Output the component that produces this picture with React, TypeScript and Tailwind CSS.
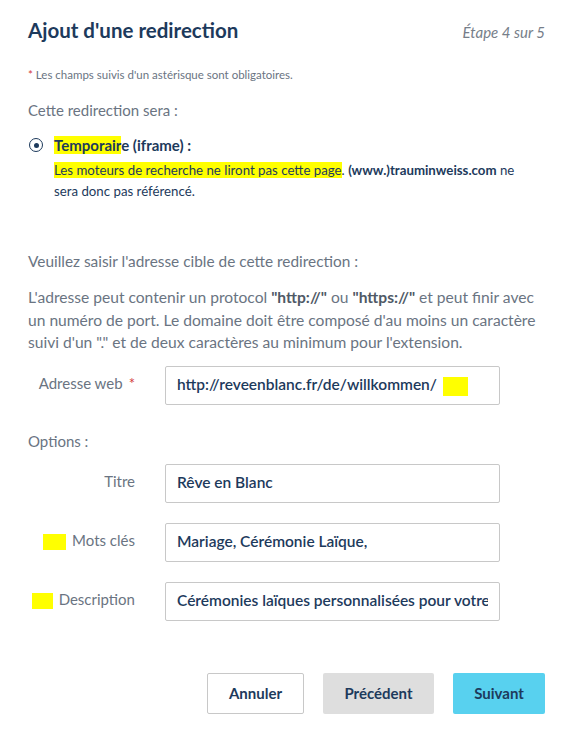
import React from 'react'

const navy = 'text-[#1d3a5c]'
const gray = 'text-[#6a7482]'

function Field({
  label,
  value,
  required,
  marker,
  mark,
}: {
  label: string
  value: string
  required?: boolean
  marker?: string
  mark?: boolean
}) {
  return (
    <div className="flex items-center">
      <div className={`w-[107px] -mt-[4px] text-right text-[15px] leading-5 ${gray}`}>
        {marker && <span className={`mr-[6px] inline-block h-[16px] bg-[#ffff00] align-middle ${marker}`} />}
        {label}
        {required && <span className="ml-[6px] text-[#d33b3b]">*</span>}
      </div>
      <div className="ml-[30px] flex h-[39px] w-[335px] items-center rounded-[2px] border border-[#c8c8c8] px-[11px]">
        <div className={`min-w-0 overflow-hidden whitespace-nowrap text-[15.5px] font-semibold ${navy}`}>
          {value}
          {mark && <span className="ml-[6px] inline-block h-[19px] w-[25px] bg-[#ffff00] align-middle" />}
        </div>
      </div>
    </div>
  )
}

export default function App() {
  return (
    <div className="min-h-screen bg-white pl-7 pr-[21px] font-['Lato','Liberation_Sans',sans-serif]">
      <div className="flex items-baseline justify-between pt-4">
        <h1 className={`text-[20.5px] font-bold leading-7 ${navy}`}>Ajout d'une redirection</h1>
        <span className="text-[15px] italic text-[#767e89]">Étape 4 sur 5</span>
      </div>

      <p className={`mt-[23px] text-[11.5px] leading-4 ${gray}`}>
        <span className="text-[#d33b3b]">*</span> Les champs suivis d'un astérisque sont obligatoires.
      </p>

      <p className={`mt-[17px] text-[15px] leading-5 ${gray}`}>Cette redirection sera :</p>

      <div className="mt-[15px] flex items-center">
        <span className="ml-px flex h-[14px] w-[14px] items-center justify-center rounded-full border-[1.5px] border-[#1d3a5c]">
          <span className="h-[5px] w-[5px] rounded-full bg-[#1d3a5c]" />
        </span>
        <span className={`ml-[11px] text-[15px] font-bold leading-5 ${navy}`}>
          <span className="bg-[#ffff00]">Temporair</span>e (iframe) :
        </span>
      </div>

      <p className={`ml-[26px] mt-[5px] pr-[14px] text-[13.25px] leading-[21px] ${navy}`}>
        <span className="bg-[#ffff00]">Les moteurs de recherche ne liront pas cette page</span>.{' '}
        <span className="font-bold">(www.)trauminweiss.com</span> ne
        <br />
        sera donc pas référencé.
      </p>

      <p className={`mt-[49px] text-[15.4px] leading-5 ${gray}`}>
        Veuillez saisir l'adresse cible de cette redirection :
      </p>

      <p className={`mt-[15px] text-[15.6px] leading-[22.5px] ${gray}`}>
        L'adresse peut contenir un protocol <b className="text-[#4f5966]">"http://"</b> ou{' '}
        <b className="text-[#4f5966]">"https://"</b> et peut finir avec
        <br />
        un numéro de port. Le domaine doit être composé d'au moins un caractère
        <br />
        suivi d'un "." et de deux caractères au minimum pour l'extension.
      </p>

      <div className="mt-3">
        <Field label="Adresse web" value="http://reveenblanc.fr/de/willkommen/" required mark />
      </div>

      <p className={`mt-[26px] text-[15px] leading-5 ${gray}`}>Options :</p>

      <div className="mt-[13px] flex flex-col gap-5">
        <Field label="Titre" value="Rêve en Blanc" />
        <Field label="Mots clés" value="Mariage, Cérémonie Laïque," marker="w-[23px]" />
        <Field
          label="Description"
          value="Cérémonies laïques personnalisées pour votre mariage"
          marker="w-[21px]"
        />
      </div>

      <div className="mt-[52px] flex justify-end gap-[19px]">
        <button className={`h-[41px] w-[97px] rounded-[2px] border border-[#c8c8c8] bg-white text-[15px] font-bold ${navy}`}>
          Annuler
        </button>
        <button className={`h-[41px] w-[111px] rounded-[2px] bg-[#dedede] text-[15px] font-bold ${navy}`}>
          Précédent
        </button>
        <button className={`h-[41px] w-[92px] rounded-[2px] bg-[#58d1ef] text-[15px] font-bold ${navy}`}>
          Suivant
        </button>
      </div>
    </div>
  )
}
